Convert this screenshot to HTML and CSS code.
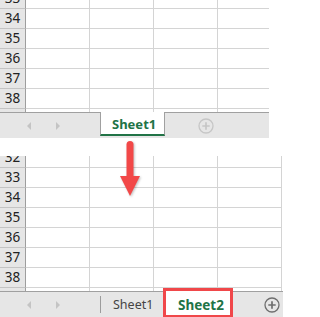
FILE: index.html
```html
<!DOCTYPE html>
<html>
<head>
<meta charset="utf-8">
<link rel="stylesheet" href="styles.css">
</head>
<body>
<div class="page">
  <section class="sheet sheet-top">
    <div class="grid grid-top">
      <div class="rows rows-top">
        <div class="row"><div class="rh">33</div><div class="c"></div><div class="c"></div><div class="c"></div><div class="c"></div></div>
        <div class="row"><div class="rh">34</div><div class="c"></div><div class="c"></div><div class="c"></div><div class="c"></div></div>
        <div class="row"><div class="rh">35</div><div class="c"></div><div class="c"></div><div class="c"></div><div class="c"></div></div>
        <div class="row"><div class="rh">36</div><div class="c"></div><div class="c"></div><div class="c"></div><div class="c"></div></div>
        <div class="row"><div class="rh">37</div><div class="c"></div><div class="c"></div><div class="c"></div><div class="c"></div></div>
        <div class="row"><div class="rh">38</div><div class="c"></div><div class="c"></div><div class="c"></div><div class="c"></div></div>
        <div class="row"><div class="rh"></div><div class="c"></div><div class="c"></div><div class="c"></div><div class="c"></div></div>
      </div>
    </div>
    <div class="tabbar">
      <div class="nav"><span class="tri tri-left"></span><span class="tri tri-right"></span></div>
      <div class="tab tab-top">Sheet1</div>
      <svg class="add add-top" width="16" height="16" viewBox="0 0 16 16"><circle cx="8" cy="8" r="7" fill="none" stroke="currentColor" stroke-width="1.3"/><path d="M8 4.3V11.7M4.3 8H11.7" stroke="currentColor" stroke-width="1.7"/></svg>
    </div>
  </section>

  <section class="sheet sheet-bottom">
    <div class="grid grid-bottom">
      <div class="rows rows-bottom">
        <div class="row"><div class="rh">32</div><div class="c"></div><div class="c"></div><div class="c"></div><div class="c"></div></div>
        <div class="row"><div class="rh">33</div><div class="c"></div><div class="c"></div><div class="c"></div><div class="c"></div></div>
        <div class="row"><div class="rh">34</div><div class="c"></div><div class="c"></div><div class="c"></div><div class="c"></div></div>
        <div class="row"><div class="rh">35</div><div class="c"></div><div class="c"></div><div class="c"></div><div class="c"></div></div>
        <div class="row"><div class="rh">36</div><div class="c"></div><div class="c"></div><div class="c"></div><div class="c"></div></div>
        <div class="row"><div class="rh">37</div><div class="c"></div><div class="c"></div><div class="c"></div><div class="c"></div></div>
        <div class="row"><div class="rh">38</div><div class="c"></div><div class="c"></div><div class="c"></div><div class="c"></div></div>
        <div class="row"><div class="rh"></div><div class="c"></div><div class="c"></div><div class="c"></div><div class="c"></div></div>
      </div>
    </div>
    <div class="tabbar">
      <div class="nav"><span class="tri tri-left"></span><span class="tri tri-right"></span></div>
      <span class="sep"></span>
      <div class="tab-plain">Sheet1</div>
      <div class="tab tab-bottom">Sheet2</div>
      <svg class="add add-bottom" width="16" height="16" viewBox="0 0 16 16"><circle cx="8" cy="8" r="7" fill="none" stroke="currentColor" stroke-width="1.3"/><path d="M8 4.3V11.7M4.3 8H11.7" stroke="currentColor" stroke-width="1.7"/></svg>
    </div>
  </section>

  <svg class="arrow" width="24" height="60" viewBox="0 0 24 60"><rect x="8.5" y="2" width="7" height="38" rx="3.5" fill="#f24848"/><polygon points="2,37 22,37 12,57" fill="#f24848"/></svg>
  <div class="highlight"></div>
</div>
</body>
</html>
```

FILE: styles.css
```css
html, body {
  margin: 0;
  padding: 0;
  background: #fff;
}
body {
  font-family: "Noto Sans", "Open Sans", sans-serif;
}
.page {
  position: relative;
  width: 283px;
  height: 317px;
  overflow: hidden;
}
.sheet {
  overflow: hidden;
}
.sheet-top {
  width: 269px;
  height: 138px;
}
.sheet-bottom {
  width: 283px;
  height: 161px;
  margin-top: 18px;
}
.grid {
  overflow: hidden;
}
.grid-top {
  height: 112px;
}
.grid-bottom {
  height: 135px;
}
.rows-top {
  margin-top: -11px;
}
.rows-bottom {
  margin-top: -8px;
}
.row {
  display: flex;
  height: 20px;
}
.rh {
  flex: none;
  box-sizing: border-box;
  width: 26px;
  height: 20px;
  background: #e6e6e6;
  border-right: 1px solid #9e9e9e;
  border-bottom: 1px solid #c4c4c4;
  color: #222;
  font-size: 13.5px;
  line-height: 19px;
  text-align: center;
}
.c {
  flex: none;
  box-sizing: border-box;
  width: 64px;
  height: 20px;
  border-right: 1px solid #d4d4d4;
  border-bottom: 1px solid #d4d4d4;
}
.tabbar {
  display: flex;
  align-items: center;
  box-sizing: border-box;
  height: 26px;
  background: #e6e6e6;
  border-top: 1px solid #a0a0a0;
}
.nav {
  flex: none;
  width: 100px;
  display: flex;
  align-items: center;
  box-sizing: border-box;
  padding-left: 27px;
  gap: 25px;
}
.tri {
  width: 0;
  height: 0;
  border-top: 4px solid transparent;
  border-bottom: 4px solid transparent;
}
.tri-left {
  border-right: 4px solid #c4c4c4;
}
.tri-right {
  border-left: 4px solid #c4c4c4;
}
.tab {
  flex: none;
  align-self: flex-start;
  box-sizing: border-box;
  margin-top: -1px;
  background: #fff;
  color: #217346;
  font-weight: 700;
  display: flex;
  align-items: center;
}
.tab-top {
  width: 65px;
  height: 24px;
  border-left: 1px solid #a0a0a0;
  border-right: 1px solid #a0a0a0;
  border-bottom: 2px solid #217346;
  font-size: 13px;
  padding-left: 11px;
  padding-top: 1px;
}
.add {
  flex: none;
  display: block;
}
.add-top {
  color: #c6c6c6;
  margin-left: 33px;
}
.sep {
  flex: none;
  width: 1px;
  height: 17px;
  background: #9c9c9c;
}
.tab-plain {
  flex: none;
  box-sizing: border-box;
  width: 64px;
  padding-left: 12px;
  font-size: 12.5px;
  color: #444;
}
.tab-bottom {
  width: 66px;
  height: 26px;
  font-size: 13.5px;
  padding-left: 13px;
  padding-top: 1px;
}
.add-bottom {
  color: #6e6e6e;
  margin-left: 33px;
}
.arrow {
  position: absolute;
  left: 118px;
  top: 139px;
  filter: drop-shadow(1px 1px 1px rgba(0, 0, 0, 0.25));
}
.highlight {
  position: absolute;
  left: 163px;
  top: 288px;
  width: 70px;
  height: 30px;
  box-sizing: border-box;
  border: 3px solid #f0474a;
}
```
